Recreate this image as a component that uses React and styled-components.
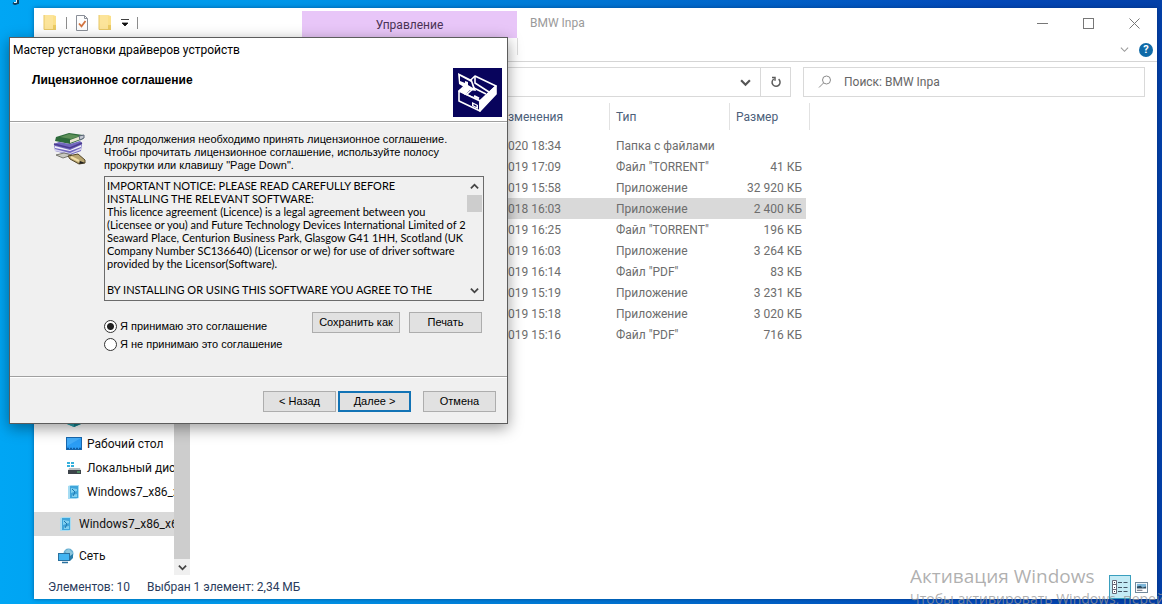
import React, { useState } from "react";
import styled, { createGlobalStyle } from "styled-components";

const GlobalStyle = createGlobalStyle`
  * {
    box-sizing: border-box;
  }
  body {
    margin: 0;
    font-family: Roboto, "Open Sans", sans-serif;
    font-size: 12px;
    line-height: 16px;
    color: #111;
  }
  button, input, textarea {
    font: inherit;
    color: inherit;
    margin: 0;
  }
`;

const files = [
  { date: "020 18:34", type: "Папка с файлами", size: "" },
  { date: "019 17:09", type: 'Файл "TORRENT"', size: "41 КБ" },
  { date: "019 15:58", type: "Приложение", size: "32 920 КБ" },
  { date: "018 16:03", type: "Приложение", size: "2 400 КБ", selected: true },
  { date: "019 16:25", type: 'Файл "TORRENT"', size: "196 КБ" },
  { date: "019 16:03", type: "Приложение", size: "3 264 КБ" },
  { date: "019 16:14", type: 'Файл "PDF"', size: "83 КБ" },
  { date: "019 15:19", type: "Приложение", size: "3 231 КБ" },
  { date: "019 15:18", type: "Приложение", size: "3 020 КБ" },
  { date: "019 15:16", type: 'Файл "PDF"', size: "716 КБ" }
];

const licence = `IMPORTANT NOTICE: PLEASE READ CAREFULLY BEFORE
INSTALLING THE RELEVANT SOFTWARE:
This licence agreement (Licence) is a legal agreement between you
(Licensee or you) and Future Technology Devices International Limited of 2
Seaward Place, Centurion Business Park, Glasgow G41 1HH, Scotland (UK
Company Number SC136640) (Licensor or we) for use of driver software
provided by the Licensor(Software).

BY INSTALLING OR USING THIS SOFTWARE YOU AGREE TO THE`;

const FolderIcon = () => (
  <svg width="16" height="18" viewBox="0 0 16 18">
    <path d="M2 1h9l3 1v14H2z" fill="#fbe08a" />
    <path d="M2 1h9v14H2z" fill="#fce49a" />
    <path d="M11 11h3v5H3v-1h8z" fill="#eccb62" />
    <path d="M2 1v14.500h12" stroke="#e8c765" fill="none" />
  </svg>
);

const PropertiesIcon = () => (
  <svg width="14" height="18" viewBox="0 0 14 18">
    <path d="M1.500 1.500h8l3 3v12h-11z" fill="#fdfdfd" stroke="#8a8f98" />
    <path d="M9.500 1.500v3h3" fill="none" stroke="#8a8f98" />
    <path d="M4 9.500l2.500 2.800L10.500 7" fill="none" stroke="#d2733f" strokeWidth="1.800" />
  </svg>
);

const Chevron = ({ up, size = 9, color = "#444", weight = 1.6 }) => (
  <svg width={size} height={size} viewBox="0 0 10 10">
    <path d={up ? "M1 7l4-4 4 4" : "M1 3l4 4 4-4"} fill="none" stroke={color} strokeWidth={weight} />
  </svg>
);

const CubeIcon = () => (
  <svg width="16" height="16" viewBox="0 0 16 16">
    <path d="M8 1l7 3v8l-7 3-7-3V4z" fill="#2bb3bd" />
    <path d="M8 7l7-3v8l-7 3z" fill="#127f8c" />
    <path d="M1 4l7 3v8l-7-3z" fill="#2aa3b0" />
  </svg>
);

const DesktopIcon = () => (
  <svg width="16" height="14" viewBox="0 0 16 14">
    <rect x="0.500" y="0.500" width="15" height="12" fill="#2b9df4" stroke="#1767ae" />
    <path d="M1 1h14L1 9z" fill="#44adf8" />
    <path d="M1 11.500h14" stroke="#0d5ca5" strokeWidth="1.500" strokeDasharray="2 1" />
  </svg>
);

const DiskIcon = () => (
  <svg width="16" height="16" viewBox="0 0 16 16">
    <path d="M1 2h3v2H1zM5 2h3v2H5zM1 5h3v2H1zM5 5h3v2H5z" fill="#35b0dc" />
    <path d="M3 8h11l1 3H2z" fill="#b7bcc0" />
    <path d="M2 10h13v4H2z" fill="#3d444a" />
    <path d="M11 12h3" stroke="#5fd07b" />
  </svg>
);

const ImageDiskIcon = () => (
  <svg width="16" height="16" viewBox="0 0 16 16">
    <path d="M2 2l3-1h8v13l-3 1H2z" fill="#a5dcf3" />
    <path d="M4 2h8v12H4z" fill="#3fa5da" />
    <path d="M5 4l6 1v2L5 9zM6 11l5-1v3H6z" fill="#7fd0f0" />
    <path d="M6 5l3 3-2 4" stroke="#1a75ad" fill="none" />
  </svg>
);

const NetworkIcon = () => (
  <svg width="16" height="16" viewBox="0 0 16 16">
    <circle cx="10.500" cy="5.500" r="5" fill="#63add0" />
    <path d="M7 3l4-2 4 4-3 5z" fill="#8cc6dd" />
    <rect x="0.500" y="5.500" width="11" height="7" fill="#42b4f1" stroke="#2a719f" />
    <path d="M4 14.500h6" stroke="#2a719f" strokeWidth="1.500" />
    <path d="M12 8l3-2v4l-3 3z" fill="#287da9" />
  </svg>
);

const SearchIcon = () => (
  <svg width="14" height="14" viewBox="0 0 14 14" fill="none" stroke="#8b8b8b">
    <circle cx="8.500" cy="5" r="4" />
    <path d="M5.500 8L1 12.500" />
  </svg>
);

const RefreshIcon = () => (
  <svg width="12" height="12" viewBox="0 0 12 12" fill="none" stroke="#5c5c5c" strokeWidth="1.500">
    <path d="M8.600 3.200a4 4 0 1 1-4.800-.2" />
    <path d="M2 1.500h3v3.200" />
  </svg>
);

const SetupIcon = () => (
  <svg width="49" height="49" viewBox="0 0 49 49">
    <rect width="49" height="49" fill="#08045c" />
    <g stroke="#fff" strokeWidth="1.600" strokeLinejoin="round">
      <path d="M6 23l16-15 21 10-16 15z" fill="#08045c" />
      <path d="M6 23l21 10v10L6 33z" fill="#08045c" />
      <path d="M27 33l16-15v8L27 43z" fill="#fff" />
      <path d="M22 8v7l14 9" fill="none" />
      <path d="M13 27l8-7 12 6" fill="none" />
    </g>
    <path d="M19 34l6 3v4l-6-3z" fill="#fff" />
    <path d="M20.500 36l3 1.500v1.500l-3-1.500z" fill="#08045c" />
    <path d="M21 28l5 2.500" stroke="#fff" strokeWidth="2" />
    <path d="M5 5l14 7 4 11-6-1-5 5-6-5 5-3-5-3z" fill="#fff" />
    <path d="M7 8l11 6 2 6-5-3v-3l-3-1v2L7 13z" fill="#08045c" />
  </svg>
);

const BooksIcon = () => (
  <svg width="34" height="32" viewBox="0 0 34 32">
    <path d="M3 4L16 0l14 2v4L17 11 2 8z" fill="#2d6a3a" />
    <path d="M7 4l9-3 11 2-9 3z" fill="#5c8f57" />
    <path d="M17 7l11-4v3l-11 4z" fill="#e8e5cf" />
    <path d="M1 11l5-2 11 2 10-3 2 2-1 8-11 4L2 18z" fill="#7168bd" />
    <path d="M2 13l15 4 11-5v2l-11 4L2 15z" fill="#f0effa" />
    <path d="M2 16l15 4 11-5v2l-11 4L2 18z" fill="#d5d2ef" />
    <path d="M1 11l16 4 12-5" fill="none" stroke="#4b3b90" strokeWidth="1.500" />
    <path d="M3 22l8-2 8 2-9 3z" fill="#c9c9c1" stroke="#77776f" />
    <path d="M15 23l10-2 7 6v3l-6 1-9-5z" fill="#b7a46f" stroke="#554729" />
    <path d="M18 24l8 4" stroke="#f2dfa7" strokeWidth="2" />
    <path d="M27 28l5 2-6 1z" fill="#222" />
    <path d="M26 3l5-1v3l-4 2z" fill="#c4c8d2" stroke="#596475" />
  </svg>
);

const navItems = [
  { label: "Объемные объекты", icon: <CubeIcon /> },
  { label: "Рабочий стол", icon: <DesktopIcon /> },
  { label: "Локальный диск", icon: <DiskIcon /> },
  { label: "Windows7_x86_x64", icon: <ImageDiskIcon /> },
  { label: "Windows7_x86_x64", icon: <ImageDiskIcon />, top: true, selected: true },
  { label: "Сеть", icon: <NetworkIcon />, top: true }
];

const Explorer = () => (
  <ExplorerWindow>
    <TitleBar>
      <QuickAccess>
        <FolderIcon />
        <Divider />
        <ToolButton aria-label="Свойства"><PropertiesIcon /></ToolButton>
        <ToolButton aria-label="Новая папка"><FolderIcon /></ToolButton>
        <ToolButton aria-label="Настройка">
          <svg width="8" height="8" viewBox="0 0 8 8">
            <path d="M0 .5h8M1 4h6L4 7z" fill="#111" stroke="#111" strokeWidth="0.800" />
          </svg>
        </ToolButton>
        <Divider />
      </QuickAccess>
      <ManageTab>Управление</ManageTab>
      <WindowTitle>BMW Inpa</WindowTitle>
      <WindowControls>
        <ToolButton aria-label="Свернуть">
          <svg width="11" height="11"><path d="M0 5.500h11" stroke="#777" /></svg>
        </ToolButton>
        <ToolButton aria-label="Развернуть">
          <svg width="11" height="11"><rect x="0.500" y="0.500" width="10" height="10" fill="none" stroke="#777" /></svg>
        </ToolButton>
        <ToolButton aria-label="Закрыть">
          <svg width="11" height="11"><path d="M.5.500l10 10M10.500.500l-10 10" stroke="#777" /></svg>
        </ToolButton>
      </WindowControls>
    </TitleBar>
    <Ribbon>
      <RibbonTab />
      <RibbonTools>
        <ToolButton aria-label="Развернуть ленту"><Chevron color="#999" weight={1.2} /></ToolButton>
        <HelpButton aria-label="Справка">?</HelpButton>
      </RibbonTools>
    </Ribbon>
    <AddressRow>
      <AddressBar>
        <AddressButton $width={30} aria-label="Журнал"><Chevron size={11} color="#555" weight={2} /></AddressButton>
        <AddressButton $width={30} $line aria-label="Обновить"><RefreshIcon /></AddressButton>
      </AddressBar>
      <SearchBox>
        <SearchIcon />
        <input type="text" aria-label="Поиск" placeholder="Поиск: BMW Inpa" />
      </SearchBox>
    </AddressRow>
    <Content>
      <NavPane>
        {navItems.map((item, i) => (
          <NavItem key={i} href="#" $top={item.top} $selected={item.selected}>
            {item.icon}
            <span>{item.label}</span>
          </NavItem>
        ))}
      </NavPane>
      <NavScroll>
        <NavThumb />
        <ScrollButton $height={16} aria-label="Вниз"><Chevron weight={2} /></ScrollButton>
      </NavScroll>
      <FileTable>
        <colgroup>
          <col width="318" />
          <col width="102" />
          <col width="120" />
          <col width="76" />
          <col width="4" />
        </colgroup>
        <thead>
          <tr>
            <th />
            <th><HeadCell $line>зменения</HeadCell></th>
            <th><HeadCell $line $indent>Тип</HeadCell></th>
            <th colSpan="2"><HeadCell $line $indent>Размер</HeadCell></th>
          </tr>
        </thead>
        <tbody>
          {files.map((file, i) => (
            <FileRow key={i} $selected={file.selected}>
              <td />
              <td>{file.date}</td>
              <TypeCell>{file.type}</TypeCell>
              <SizeCell>{file.size}</SizeCell>
            </FileRow>
          ))}
        </tbody>
      </FileTable>
    </Content>
    <StatusBar>
      <span>Элементов: 10</span>
      <span>Выбран 1 элемент: 2,34 МБ</span>
      <ViewButtons>
        <ViewButton $active aria-label="Таблица">
          <svg width="16" height="16" viewBox="0 0 16 16">
            <path d="M.5 1.500h4v13h-4zM.5 5.500h4M.5 10.500h4" fill="#fff" stroke="#667" />
            <path d="M2 3.500h1M2 8.500h1M2 12.500h1" stroke="#345" />
            <path d="M6 3.500h4M11.500 3.500h4M6 8.500h4M11.500 8.500h4M6 12.500h4M11.500 12.500h4" stroke="#456" />
          </svg>
        </ViewButton>
        <ViewButton aria-label="Значки">
          <svg width="13" height="11" viewBox="0 0 14 12">
            <rect x="0.500" y="0.500" width="13" height="11" fill="#fff" stroke="#667f93" />
            <path d="M2 2h10v4H2z" fill="#7eb6d8" />
            <path d="M2 5l4-1 2 2 4-1v2H2z" fill="#2d4b60" />
            <path d="M2 9h6" stroke="#556" />
          </svg>
        </ViewButton>
      </ViewButtons>
    </StatusBar>
  </ExplorerWindow>
);

const DriverWizard = () => {
  const [accepted, setAccepted] = useState(true);
  return (
    <Wizard>
      <WizardTitle>Мастер установки драйверов устройств</WizardTitle>
      <WizardHeader>
        <h1>Лицензионное соглашение</h1>
        <SetupIcon />
      </WizardHeader>
      <WizardBody>
        <BooksIcon />
        <div>
          <Intro>
            Для продолжения необходимо принять лицензионное соглашение.<br />
            Чтобы прочитать лицензионное соглашение, используйте полосу<br />
            прокрутки или клавишу "Page Down".
          </Intro>
          <LicenceBox>
            <textarea readOnly aria-label="Лицензионное соглашение" value={licence} />
            <LicenceScroll>
              <ScrollButton $height={17} aria-label="Вверх"><Chevron up weight={2} /></ScrollButton>
              <LicenceThumb />
              <ScrollButton $height={17} aria-label="Вниз"><Chevron weight={2} /></ScrollButton>
            </LicenceScroll>
          </LicenceBox>
          <Choices>
            <div>
              <Radio>
                <input type="radio" name="accept" checked={accepted} onChange={() => setAccepted(true)} />
                Я принимаю это соглашение
              </Radio>
              <Radio>
                <input type="radio" name="accept" checked={!accepted} onChange={() => setAccepted(false)} />
                Я не принимаю это соглашение
              </Radio>
            </div>
            <ChoiceButtons>
              <DialogButton $wide>Сохранить как</DialogButton>
              <DialogButton>Печать</DialogButton>
            </ChoiceButtons>
          </Choices>
        </div>
      </WizardBody>
      <WizardFooter>
        <StepButtons>
          <DialogButton>&lt; Назад</DialogButton>
          <DialogButton $primary>Далее &gt;</DialogButton>
        </StepButtons>
        <DialogButton>Отмена</DialogButton>
      </WizardFooter>
    </Wizard>
  );
};

export default function App() {
  return (
    <>
      <GlobalStyle />
      <Desktop>
        <ShortcutLabel width="8" height="5" viewBox="0 0 8 5">
          <path d="M6 0v3L3 4 1 3" fill="none" stroke="#123c58" strokeWidth="2" />
          <path d="M4.500 0v2.500H2" fill="none" stroke="#e5f5ff" />
        </ShortcutLabel>
        <Explorer />
        <DriverWizard />
        <Watermark>
          <strong>Активация Windows</strong>
          <span>Чтобы активировать Windows, перейдите</span>
        </Watermark>
      </Desktop>
    </>
  );
}

const Desktop = styled.main`
  position: relative;
  display: flex;
  height: 100vh;
  padding: 8px 5px 5px 34px;
  overflow: hidden;
  background: linear-gradient(90deg, #00a6f4 0%, #0095e8 25%, #0070d0 55%, #0348b8 85%, #0340a8 100%);
`;

const ShortcutLabel = styled.svg`
  position: absolute;
  left: 12px;
  top: 0;
`;

const ExplorerWindow = styled.section`
  flex: 1;
  min-width: 0;
  display: flex;
  flex-direction: column;
  background: #fff;
  box-shadow: 0 0 4px rgba(0, 30, 80, 0.5);
`;

const TitleBar = styled.header`
  display: flex;
  align-items: stretch;
  height: 30px;
  padding-right: 17px;
`;

const QuickAccess = styled.div`
  display: flex;
  align-items: center;
  gap: 8px;
  width: 268px;
  padding-left: 8px;
`;

const Divider = styled.i`
  width: 1px;
  height: 12px;
  background: #8d8d8d;
`;

const ToolButton = styled.button`
  display: flex;
  align-items: center;
  justify-content: center;
  padding: 0;
  border: 0;
  background: none;
`;

const ManageTab = styled.div`
  width: 215px;
  margin-top: 3px;
  padding-top: 6px;
  text-align: center;
  color: #4a3355;
  background: #e8c6f8;
`;

const WindowTitle = styled.div`
  flex: 1;
  padding: 7px 13px;
  color: #9a9a9a;
`;

const WindowControls = styled.div`
  display: flex;
  align-items: center;
  gap: 35px;
`;

const Ribbon = styled.div`
  display: flex;
  height: 24px;
  padding-left: 268px;
  border-bottom: 1px solid #d5d5d5;
`;

const RibbonTab = styled.div`
  width: 216px;
  height: 17px;
  border-right: 1px solid #dcdcdc;
`;

const RibbonTools = styled.div`
  display: flex;
  align-items: center;
  gap: 10px;
  margin-left: auto;
  padding-right: 4px;
`;

const HelpButton = styled.button`
  width: 14px;
  height: 14px;
  padding: 0;
  border: 0;
  border-radius: 50%;
  background: #0f6aa8;
  color: #fff;
  font-size: 11px;
  font-weight: bold;
  line-height: 14px;
`;

const AddressRow = styled.div`
  display: flex;
  gap: 12px;
  padding: 5px 12px 6px 8px;
`;

const AddressBar = styled.div`
  flex: 1;
  display: flex;
  justify-content: flex-end;
  height: 30px;
  border: 1px solid #d9d9d9;
`;

const AddressButton = styled(ToolButton)`
  width: ${props => props.$width}px;
  border-left: ${props => (props.$line ? "1px solid #d9d9d9" : "0")};
`;

const SearchBox = styled.label`
  display: flex;
  align-items: center;
  gap: 12px;
  width: 342px;
  height: 30px;
  padding-left: 14px;
  border: 1px solid #d9d9d9;
  input {
    flex: 1;
    min-width: 0;
    padding: 0;
    border: 0;
    outline: 0;
    background: none;
  }
  input::placeholder {
    color: #666;
    opacity: 1;
  }
`;

const Content = styled.div`
  flex: 1;
  min-height: 0;
  display: flex;
  align-items: stretch;
`;

const NavPane = styled.nav`
  display: flex;
  flex-direction: column;
  justify-content: flex-end;
  width: 140px;
  padding-bottom: 7px;
  overflow: hidden;
`;

const NavItem = styled.a`
  display: flex;
  align-items: center;
  gap: 5px;
  flex: none;
  height: 24px;
  margin-top: ${props => (props.$top ? 8 : 0)}px;
  padding-left: ${props => (props.$top ? 24 : 32)}px;
  background: ${props => (props.$selected ? "#d9d9d9" : "none")};
  color: #111;
  text-decoration: none;
  white-space: nowrap;
  overflow: hidden;
  svg {
    flex: none;
  }
`;

const NavScroll = styled.div`
  display: flex;
  flex-direction: column;
  width: 16px;
  background: #f0f0f0;
`;

const NavThumb = styled.div`
  flex: 1;
  background: #cdcdcd;
`;

const ScrollButton = styled(ToolButton)`
  width: 100%;
  height: ${props => props.$height}px;
  background: #f0f0f0;
`;

const FileTable = styled.table`
  align-self: flex-start;
  table-layout: fixed;
  width: 620px;
  border-collapse: collapse;
  color: #6d6d6d;
  th, td {
    padding: 0;
    white-space: nowrap;
  }
  th {
    height: 32px;
    vertical-align: top;
    text-align: left;
    font-weight: normal;
    color: #4c607a;
  }
  td {
    height: 21px;
  }
`;

const HeadCell = styled.div`
  height: 27px;
  padding: 6px 0 0 ${props => (props.$indent ? 6 : 0)}px;
  border-right: ${props => (props.$line ? "1px solid #e2e2e2" : "0")};
`;

const FileRow = styled.tr`
  td {
    background: ${props => (props.$selected ? "#d9d9d9" : "none")};
  }
`;

const TypeCell = styled.td`
  && {
    padding-left: 6px;
  }
`;

const SizeCell = styled.td`
  && {
    padding-right: 4px;
    text-align: right;
  }
`;

const StatusBar = styled.footer`
  display: flex;
  align-items: center;
  gap: 17px;
  height: 24px;
  padding: 0 9px 0 14px;
  color: #2a3c5c;
`;

const ViewButtons = styled.div`
  display: flex;
  align-items: center;
  gap: 4px;
  height: 100%;
  margin-left: auto;
`;

const ViewButton = styled(ToolButton)`
  width: ${props => (props.$active ? 22 : 13)}px;
  height: 100%;
  border: ${props => (props.$active ? "1px solid #3a9fbe" : "0")};
  background: ${props => (props.$active ? "#c4ebf5" : "none")};
`;

// the wizard floats over the explorer window
const Wizard = styled.form`
  position: absolute;
  left: 9px;
  top: 37px;
  width: 499px;
  border: 1px solid #5c5c5c;
  background: #f0f0f0;
  box-shadow: 0 4px 14px rgba(0, 0, 0, 0.4);
  font-family: "Liberation Sans", Arial, sans-serif;
  font-size: 11px;
  line-height: 13px;
  color: #000;
`;

const WizardTitle = styled.div`
  padding: 4px 3px;
  background: #fff;
  font-family: Roboto, "Open Sans", sans-serif;
  font-size: 12px;
  line-height: 16px;
`;

const WizardHeader = styled.div`
  display: flex;
  justify-content: space-between;
  height: 60px;
  padding: 6px 5px 0 22px;
  border-bottom: 1px solid #a0a0a0;
  background: #fff;
  h1 {
    margin: 0;
    padding-top: 6px;
    font-size: 12px;
    font-weight: bold;
  }
`;

const WizardBody = styled.div`
  display: flex;
  gap: 17px;
  padding: 10px 23px 22px 43px;
  border-top: 1px solid #fff;
  border-bottom: 1px solid #a0a0a0;
  > div {
    flex: 1;
    min-width: 0;
  }
`;

const Intro = styled.p`
  margin: 0 0 4px;
`;

const LicenceBox = styled.div`
  display: flex;
  height: 125px;
  border: 1px solid #6b6b6b;
  textarea {
    flex: 1;
    min-width: 0;
    padding: 2px 0 0 2px;
    border: 0;
    outline: 0;
    resize: none;
    overflow: hidden;
    white-space: pre;
    background: none;
    font-family: Lato, Arial, sans-serif;
  }
`;

const LicenceScroll = styled.div`
  display: flex;
  flex-direction: column;
  justify-content: space-between;
  width: 17px;
  padding: 1px;
`;

const LicenceThumb = styled.div`
  height: 17px;
  margin-bottom: auto;
  background: #cdcdcd;
`;

const Choices = styled.div`
  display: flex;
  justify-content: space-between;
  padding-top: 11px;
`;

const Radio = styled.label`
  display: flex;
  align-items: center;
  gap: 3px;
  height: 18px;
  &:first-child {
    margin-top: 5px;
  }
  &:last-child {
    margin-bottom: 1px;
  }
  input {
    appearance: none;
    width: 13px;
    height: 13px;
    border: 1px solid #333;
    border-radius: 50%;
    background: #fff;
  }
  input:checked {
    background: radial-gradient(circle, #222 0 3px, #fff 4px);
  }
`;

const ChoiceButtons = styled.div`
  display: flex;
  gap: 9px;
  padding-right: 2px;
`;

const DialogButton = styled.button.attrs({ type: "button" })`
  width: ${props => (props.$wide ? 88 : 73)}px;
  height: 21px;
  padding: 0;
  border: ${props => (props.$primary ? "2px solid #1273b5" : "1px solid #adadad")};
  background: #e1e1e1;
  white-space: nowrap;
`;

const WizardFooter = styled.div`
  display: flex;
  justify-content: flex-end;
  gap: 12px;
  padding: 13px 11px 11px;
  border-top: 1px solid #fff;
`;

const StepButtons = styled.div`
  display: flex;
  gap: 2px;
`;

const Watermark = styled.div`
  position: absolute;
  right: 0;
  bottom: -4px;
  width: 252px;
  overflow: hidden;
  color: rgba(150, 150, 150, 0.75);
  white-space: nowrap;
  pointer-events: none;
  font-family: "Open Sans", "Noto Sans", sans-serif;
  strong {
    display: block;
    font-size: 19px;
    font-weight: normal;
    line-height: 28px;
  }
  span {
    display: block;
    font-size: 14px;
    line-height: 18px;
  }
`;
